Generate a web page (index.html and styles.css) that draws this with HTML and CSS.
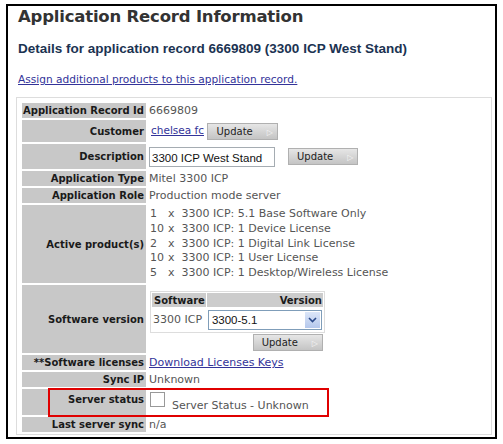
FILE: index.html
```html
<!DOCTYPE html>
<html lang="en">
<head>
    <meta charset="UTF-8">
    <title>Application Record Information</title>
    <link rel="stylesheet" href="styles.css">
</head>
<body>
    <div class="frame">
        <h1 class="page__title">Application Record Information</h1>
        <h2 class="page__subtitle">Details for application record 6669809 (3300 ICP West Stand)</h2>
        <p class="page__assign"><a href="#">Assign additional products to this application record.</a></p>

        <div class="record">
            <table class="record__table">
                <tr class="row-s">
                    <th>Application Record Id</th>
                    <td>6669809</td>
                </tr>
                <tr class="row-customer">
                    <th>Customer</th>
                    <td><a class="customer" href="#">chelsea fc</a> <button class="btn">Update<span class="btn__arrow">&#9655;</span></button></td>
                </tr>
                <tr class="row-desc">
                    <th>Description</th>
                    <td><input class="field" type="text" value="3300 ICP West Stand"><button class="btn btn_far">Update<span class="btn__arrow">&#9655;</span></button></td>
                </tr>
                <tr class="row-s">
                    <th>Application Type</th>
                    <td>Mitel 3300 ICP</td>
                </tr>
                <tr class="row-s">
                    <th>Application Role</th>
                    <td>Production mode server</td>
                </tr>
                <tr class="row-products">
                    <th>Active product(s)</th>
                    <td>
                        <div><span class="products__num">1</span>x&nbsp; 3300 ICP: 5.1 Base Software Only</div>
                        <div><span class="products__num">10</span>x&nbsp; 3300 ICP: 1 Device License</div>
                        <div><span class="products__num">2</span>x&nbsp; 3300 ICP: 1 Digital Link License</div>
                        <div><span class="products__num">10</span>x&nbsp; 3300 ICP: 1 User License</div>
                        <div><span class="products__num">5</span>x&nbsp; 3300 ICP: 1 Desktop/Wireless License</div>
                    </td>
                </tr>
                <tr class="row-software">
                    <th>Software version</th>
                    <td>
                        <table class="sw">
                            <tr>
                                <th class="sw__left">Software</th>
                                <th>Version</th>
                            </tr>
                            <tr>
                                <td>3300 ICP</td>
                                <td>
                                    <div class="select">
                                        <span>3300-5.1</span>
                                        <span class="select__arrow">
                                            <svg width="9" height="6" viewBox="0 0 9 6"><path d="M1 1 L4.5 4.5 L8 1" fill="none" stroke="#2b4a8a" stroke-width="1.6"/></svg>
                                        </span>
                                    </div>
                                </td>
                            </tr>
                        </table>
                        <div class="software__update"><button class="btn">Update<span class="btn__arrow">&#9655;</span></button></div>
                    </td>
                </tr>
                <tr class="row-s">
                    <th>**Software licenses</th>
                    <td><a href="#">Download Licenses Keys</a></td>
                </tr>
                <tr class="row-s">
                    <th>Sync IP</th>
                    <td>Unknown</td>
                </tr>
                <tr class="row-status">
                    <th>Server status</th>
                    <td><span class="check"></span><span class="status__text">Server Status - Unknown</span></td>
                </tr>
                <tr class="row-s">
                    <th>Last server sync</th>
                    <td>n/a</td>
                </tr>
            </table>
            <div class="highlight"></div>
        </div>
    </div>
</body>
</html>
```

FILE: styles.css
```css
body {
    margin: 0;
    background: #ffffff;
    font-family: "DejaVu Sans", Verdana, sans-serif;
}

.frame {
    margin: 4px 6px 3px 6px;
    height: 431px;
    border: 2px solid #000000;
    padding: 0 0 0 10px;
}

.page__title {
    margin: 0;
    padding-top: 1px;
    font-size: 16.5px;
    letter-spacing: -0.2px;
    font-weight: bold;
    color: #333333;
}

.page__subtitle {
    margin: 15px 0 0 0;
    font-family: "Liberation Sans", Arial, sans-serif;
    font-size: 13.5px;
    font-weight: bold;
    color: #1b3352;
}

.page__assign {
    margin: 17px 0 0 0;
    font-size: 10.6px;
}

.page__assign a,
.record a {
    color: #333399;
    text-decoration: underline;
}

.record {
    position: relative;
    margin: 12px 3px 0 -2px;
}

.record__table {
    width: 100%;
    border: 1px solid #dddddd;
    border-spacing: 0 2px;
    padding: 3px 5px 0 5px;
    font-size: 11px;
    color: #555555;
}

.record__table > tbody > tr > th {
    width: 122px;
    height: 15px;
    background: #c8c8c8;
    color: #1a1a1a;
    text-align: right;
    font-size: 10px;
    font-weight: bold;
    padding: 0 2px 0 0;
    white-space: nowrap;
}

.record__table > tbody > tr > td {
    height: 15px;
    padding: 0 0 0 3px;
    vertical-align: middle;
    white-space: nowrap;
}

.record__table > tbody > .row-customer > th,
.record__table > tbody > .row-customer > td {
    height: 22px;
}

.record__table > tbody > .row-desc > th,
.record__table > tbody > .row-desc > td {
    height: 25px;
}

.record__table > tbody > .row-products > td {
    height: 76px;
    padding: 1px 0 1px 4px;
    line-height: 14.7px;
}

.record__table > tbody > .row-software > td {
    height: 62px;
    padding: 6px 0 0 4px;
    vertical-align: top;
}

.record__table > tbody > .row-status > th {
    height: 21px;
    vertical-align: top;
    padding-top: 5px;
}

.record__table > tbody > .row-status > td {
    height: 26px;
    vertical-align: top;
    padding-left: 4px;
}

.customer {
    font-size: 10.5px;
    margin-left: 2px;
}

.btn {
    font-family: "DejaVu Sans", Verdana, sans-serif;
    font-size: 10px;
    color: #222222;
    background: linear-gradient(#e6e6e6, #c4c4c4);
    border: 1px solid #b0b0b0;
    border-radius: 0;
    padding: 1px 4px 1px 8px;
    height: 17px;
    vertical-align: middle;
}

.btn__arrow {
    margin-left: 14px;
    color: #f4f4f4;
    font-size: 8px;
}

.btn_far {
    margin-left: 13px;
}

.field {
    width: 126px;
    height: 20px;
    box-sizing: border-box;
    border: 1px solid #a5acb2;
    padding: 2px 2px 0 2px;
    font-family: "Liberation Sans", Arial, sans-serif;
    font-size: 11.5px;
    color: #111111;
    vertical-align: middle;
}

.products__num {
    display: inline-block;
    width: 18px;
}

.sw {
    border: 1px solid #dddddd;
    border-spacing: 1px;
    font-size: 11px;
    color: #555555;
}

.sw th {
    background: #cccccc;
    color: #1a1a1a;
    font-size: 10px;
    font-weight: bold;
    text-align: right;
    height: 14px;
    padding: 0 1px;
}

.sw .sw__left {
    text-align: left;
    padding-left: 2px;
}

.sw td {
    height: 23px;
    padding: 0 1px 0 1px;
}

.select {
    width: 114px;
    height: 20px;
    box-sizing: border-box;
    border: 1px solid #7f9db9;
    display: flex;
    align-items: center;
    justify-content: space-between;
    font-family: "Liberation Sans", Arial, sans-serif;
    font-size: 11.5px;
    color: #111111;
    padding-left: 3px;
}

.select__arrow {
    width: 15px;
    height: 16px;
    margin-right: 1px;
    background: linear-gradient(#dce6f8, #b5c8ec);
    display: flex;
    align-items: center;
    justify-content: center;
}

.software__update {
    width: 173px;
    text-align: right;
    margin-top: 1px;
}

.check {
    display: inline-block;
    width: 13px;
    height: 13px;
    border: 1px solid #999999;
    vertical-align: top;
    margin-top: 3px;
}

.status__text {
    display: inline-block;
    margin-left: 7px;
    margin-top: 10px;
    vertical-align: top;
}

.highlight {
    position: absolute;
    left: 32px;
    top: 291px;
    width: 277px;
    height: 25px;
    border: 2px solid #e00000;
}
```
